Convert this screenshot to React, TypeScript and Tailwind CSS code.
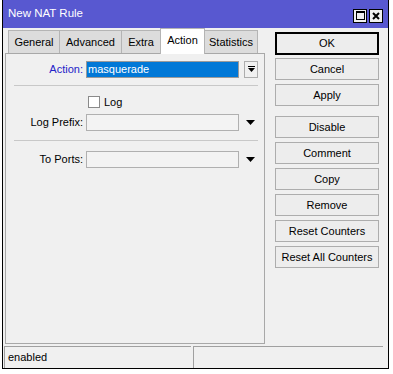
import * as React from "react";

const font = { fontFamily: '"Liberation Sans", Arial, sans-serif' };

const tabs = [
  { label: "General", w: "w-[52px]" },
  { label: "Advanced", w: "w-[63px]" },
  { label: "Extra", w: "w-[40px]" },
  { label: "Action", w: "w-[45px]" },
  { label: "Statistics", w: "w-[54px]" },
];

function Arrow() {
  return (
    <svg width="9" height="6" viewBox="0 0 9 6">
      <polygon points="0,0 9,0 4.5,5" fill="#000" />
    </svg>
  );
}

function Btn({ label, className = "", primary = false }: { label: string; className?: string; primary?: boolean }) {
  return (
    <div
      className={
        "w-[104px] flex items-center justify-center bg-[#ededed] text-[11px] text-black " +
        (primary ? "h-[23px] border-2 border-black " : "h-[22px] border border-[#adadad] ") +
        className
      }
    >
      {label}
    </div>
  );
}

export default function App() {
  return (
    <div className="w-[393px] h-[374px] bg-white" style={font}>
      <div className="ml-[2px] w-[387px] h-[369px] border-x border-b border-black flex flex-col bg-[#f0f0f0]">
        {/* title bar */}
        <div className="h-[28px] shrink-0 bg-[#5858d0] flex items-center pl-[5px] pr-[5px]">
          <span className="text-[11.5px] text-white">New NAT Rule</span>
          <div className="ml-auto flex gap-[2px] mt-[3px]">
            <div className="w-[14px] h-[14px] bg-[#f0f0f0] border border-black flex items-center justify-center">
              <div className="w-[9px] h-[9px] border border-black border-t-2" />
            </div>
            <div className="w-[14px] h-[14px] bg-[#f0f0f0] border border-black flex items-center justify-center">
              <svg width="8" height="8" viewBox="0 0 8 8">
                <path d="M1 1 L7 7 M7 1 L1 7" stroke="#000" strokeWidth="2" />
              </svg>
            </div>
          </div>
        </div>

        {/* main */}
        <div className="flex flex-1 min-h-0">
          <div className="pl-[2px] flex flex-col">
            <div className="h-[25px] flex items-end pl-[3px]">
              {tabs.map((t, i) => {
                const active = t.label === "Action";
                return (
                  <div
                    key={t.label}
                    className={
                      t.w +
                      " flex items-center justify-center text-[11px] text-black border-t border-x border-[#b4b4b4] " +
                      (i > 0 ? "-ml-px " : "") +
                      (active ? "h-[26px] -mb-px bg-white relative z-10 pb-[2px]" : "h-[23px] bg-[#dcdcdc]")
                    }
                  >
                    {t.label}
                  </div>
                );
              })}
            </div>
            <div className="w-[260px] h-[291px] border border-[#a8a8a8] pt-[7px] pl-[1px] flex flex-col text-[11px]">
              <div className="flex items-center h-[17px]">
                <span className="w-[76px] text-right text-[#2323c8]">Action:</span>
                <div className="ml-[3px] w-[153px] h-[17px] border border-[#9a9a9a] bg-[#0078d7] text-white pl-[1px] flex items-center">
                  masquerade
                </div>
                <div className="ml-[5px] w-[14px] h-[17px] border border-[#adadad] bg-[#f0f0f0] flex flex-col items-center justify-center">
                  <div className="w-[7px] h-[1px] bg-black mb-[1px]" />
                  <svg width="7" height="5" viewBox="0 0 7 5">
                    <polygon points="0,0 7,0 3.5,4" fill="#000" />
                  </svg>
                </div>
              </div>
              <div className="mt-[7px] ml-[7px] w-[244px] h-px bg-[#c8c8c8]" />
              <div className="mt-[10px] flex items-center h-[12px]">
                <div className="ml-[81px] w-[12px] h-[12px] border border-[#8a8a8a] bg-white" />
                <span className="ml-[4px]">Log</span>
              </div>
              <div className="mt-[6px] flex items-center h-[17px]">
                <span className="w-[76px] text-right">Log Prefix:</span>
                <div className="ml-[3px] w-[153px] h-[17px] border border-[#b0b0b0] bg-[#f3f3f3]" />
                <div className="ml-[7px] mt-[1px] flex">
                  <Arrow />
                </div>
              </div>
              <div className="mt-[9px] ml-[7px] w-[244px] h-px bg-[#c8c8c8]" />
              <div className="mt-[10px] flex items-center h-[17px]">
                <span className="w-[76px] text-right">To Ports:</span>
                <div className="ml-[3px] w-[153px] h-[17px] border border-[#b0b0b0] bg-[#f3f3f3]" />
                <div className="ml-[7px] mt-[1px] flex">
                  <Arrow />
                </div>
              </div>
            </div>
          </div>

          <div className="ml-[10px] pt-[4px] flex flex-col">
            <Btn label="OK" primary />
            <Btn label="Cancel" className="mt-[3px]" />
            <Btn label="Apply" className="mt-[4px]" />
            <Btn label="Disable" className="mt-[10px]" />
            <Btn label="Comment" className="mt-[4px]" />
            <Btn label="Copy" className="mt-[4px]" />
            <Btn label="Remove" className="mt-[4px]" />
            <Btn label="Reset Counters" className="mt-[4px]" />
            <Btn label="Reset All Counters" className="mt-[4px]" />
          </div>
        </div>

        {/* status bar */}
        <div className="h-[23px] shrink-0 pt-[1px] flex text-[11px]">
          <div className="ml-[1px] w-[187px] h-full border-t border-l border-[#a0a0a0] flex items-center pl-[3px]">
            enabled
          </div>
          <div className="ml-[2px] w-[190px] h-full border-t border-l border-[#a0a0a0]" />
        </div>
      </div>
    </div>
  );
}
